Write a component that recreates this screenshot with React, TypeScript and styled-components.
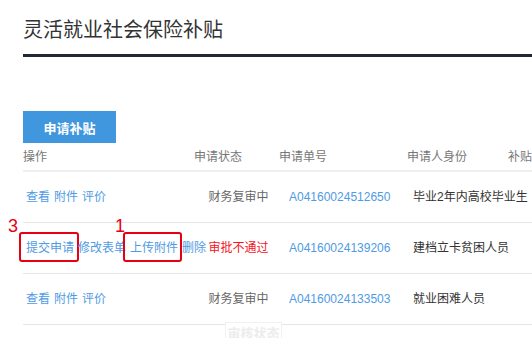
import React from "react";
import styled, { createGlobalStyle } from "styled-components";

const Global = createGlobalStyle`
  html, body { margin: 0; padding: 0; background: #fff; }
  body {
    width: 532px; height: 338px; overflow: hidden;
    font-family: "Liberation Sans", "Noto Sans CJK SC", sans-serif;
  }
`;

const Page = styled.div`
  position: relative;
  padding-left: 23px;
  padding-top: 16px;
  height: 338px;
  box-sizing: border-box;
  overflow: hidden;
`;

const Title = styled.h1`
  margin: 0;
  font-size: 20px;
  line-height: 28px;
  font-weight: normal;
  color: #333;
  white-space: nowrap;
`;

const TitleRule = styled.div`
  margin-top: 10px;
  height: 3px;
  background: #1f2833;
`;

const Toolbar = styled.div`
  margin-top: 54px;
  display: flex;
`;

const PrimaryButton = styled.button`
  width: 93px;
  height: 32px;
  border: none;
  border-radius: 0;
  background: #4097de;
  color: #fff;
  font-family: inherit;
  font-size: 13px;
  font-weight: bold;
  padding: 0;
  cursor: pointer;
`;

const Table = styled.div`
  width: 620px;
`;

const Row = styled.div<{ $head?: boolean }>`
  display: grid;
  grid-template-columns: 171px 85px 128px 101px 135px;
  align-items: center;
  height: ${(p) => (p.$head ? "27px" : "50px")};
  border-bottom: ${(p) => (p.$head ? "2px solid #f0f0f0" : "1px solid #e6e6e6")};
  font-size: 12px;
  white-space: nowrap;
`;

const HeadCell = styled.div`
  color: #777;
  font-size: 12px;
  line-height: 16px;
`;

const Cell = styled.div<{ $pad?: number; $align?: string; $color?: string }>`
  padding-left: ${(p) => p.$pad ?? 0}px;
  text-align: ${(p) => p.$align ?? "left"};
  color: ${(p) => p.$color ?? "#333"};
  line-height: 16px;
  overflow: visible;
`;

const Actions = styled.div`
  display: flex;
  gap: 4px;
  padding-left: 3px;
  line-height: 16px;
`;

const Link = styled.a`
  position: relative;
  color: #4f9be4;
  text-decoration: none;
  cursor: pointer;
`;

const Mark = styled.span<{ $left: number; $right: number }>`
  position: absolute;
  left: -${(p) => p.$left}px;
  right: -${(p) => p.$right}px;
  top: -8px;
  bottom: -6px;
  border: 2px solid #e60012;
  border-radius: 3px;
  pointer-events: none;
`;

const MarkNumber = styled.span<{ $x: number }>`
  position: absolute;
  left: ${(p) => p.$x}px;
  top: -17px;
  font-family: "Liberation Sans", sans-serif;
  font-size: 18px;
  line-height: 18px;
  color: #e60012;
`;

const GhostTag = styled.div`
  position: absolute;
  left: 225px;
  top: 322px;
  width: 57px;
  height: 24px;
  box-sizing: border-box;
  border: 1px solid #f1f1f1;
  background: #fff;
  color: #ececec;
  font-size: 13px;
  font-weight: bold;
  line-height: 22px;
  text-align: center;
`;

type Rec = {
  actions: { label: string; mark?: { n: string; l: number; r: number; x: number } }[];
  status: string;
  rejected?: boolean;
  no: string;
  who: string;
};

const rows: Rec[] = [
  {
    actions: [{ label: "查看" }, { label: "附件" }, { label: "评价" }],
    status: "财务复审中",
    no: "A04160024512650",
    who: "毕业2年内高校毕业生",
  },
  {
    actions: [
      { label: "提交申请", mark: { n: "3", l: 7, r: 5, x: -13 } },
      { label: "修改表单" },
      { label: "上传附件", mark: { n: "1", l: 7, r: 4, x: -10 } },
      { label: "删除" },
    ],
    status: "审批不通过",
    rejected: true,
    no: "A04160024139206",
    who: "建档立卡贫困人员",
  },
  {
    actions: [{ label: "查看" }, { label: "附件" }, { label: "评价" }],
    status: "财务复审中",
    no: "A04160024133503",
    who: "就业困难人员",
  },
];

export default function App() {
  return (
    <>
      <Global />
      <Page>
        <Title>灵活就业社会保险补贴</Title>
        <TitleRule />
        <Toolbar>
          <PrimaryButton>申请补贴</PrimaryButton>
        </Toolbar>
        <Table>
          <Row $head>
            <HeadCell>操作</HeadCell>
            <HeadCell>申请状态</HeadCell>
            <HeadCell>申请单号</HeadCell>
            <HeadCell>申请人身份</HeadCell>
            <HeadCell>补贴</HeadCell>
          </Row>
          {rows.map((r) => (
            <Row key={r.no}>
              <Actions>
                {r.actions.map((a) => (
                  <Link key={a.label}>
                    {a.label}
                    {a.mark && (
                      <Mark $left={a.mark.l} $right={a.mark.r}>
                        <MarkNumber $x={a.mark.x}>{a.mark.n}</MarkNumber>
                      </Mark>
                    )}
                  </Link>
                ))}
              </Actions>
              <Cell $align="center" $pad={4} $color={r.rejected ? "#f5141e" : "#666"}>
                {r.status}
              </Cell>
              <Cell $pad={10} $color="#4f9be4">
                {r.no}
              </Cell>
              <Cell $pad={6} $color="#333">
                {r.who}
              </Cell>
              <Cell />
            </Row>
          ))}
        </Table>
        <GhostTag>审核状态</GhostTag>
      </Page>
    </>
  );
}
